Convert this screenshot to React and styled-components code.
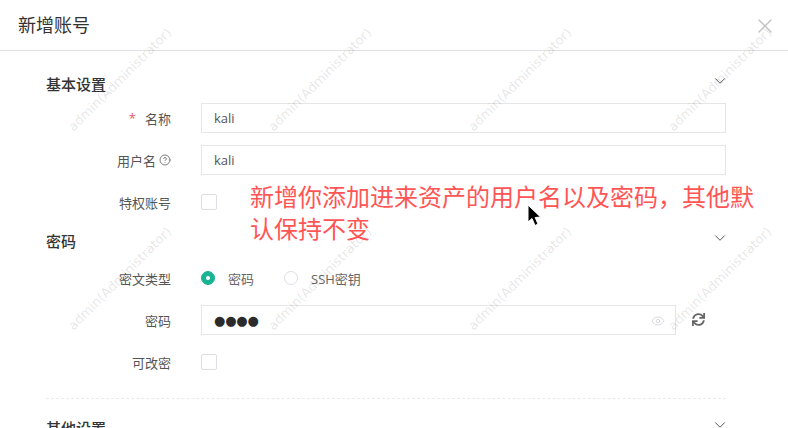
import styled, { createGlobalStyle } from "styled-components";
import { X, Eye, CircleHelp, ChevronDown } from "lucide-react";
import { FaSync } from "react-icons/fa";

const GlobalStyle = createGlobalStyle`
  html, body {
    margin: 0;
    padding: 0;
    background: #fff;
    font-family: "Open Sans", "Noto Sans CJK SC", sans-serif;
    color: #333;
  }
`;

function Section({ title, children, $gap, $top }) {
  return (
    <SectionBox $top={$top}>
      <SectionHead $gap={$gap}>
        <SectionTitle>{title}</SectionTitle>
        <Chevron>
          <ChevronDown size={18} strokeWidth={1.2} />
        </Chevron>
      </SectionHead>
      {children}
    </SectionBox>
  );
}

function Row({ label, required, help, children }) {
  return (
    <FormRow>
      <Label>
        {required && <Star>*</Star>}
        {label}
        {help && <CircleHelp size={12} strokeWidth={1.5} />}
      </Label>
      {children}
    </FormRow>
  );
}

export default function App() {
  const marks = Array.from({ length: 8 });
  return (
    <>
      <GlobalStyle />
      <Modal>
        <Header>
          <Title>新增账号</Title>
          <CloseButton>
            <X size={24} strokeWidth={1.5} />
          </CloseButton>
        </Header>
        <Body>
          <Section title="基本设置">
            <Row label="名称" required>
              <TextInput readOnly value="kali" />
            </Row>
            <Row label="用户名" help>
              <TextInput readOnly value="kali" />
            </Row>
            <Row label="特权账号">
              <Checkbox />
            </Row>
          </Section>
          <Section title="密码" $gap={3} $top={7}>
            <Row label="密文类型">
              <RadioGroup>
                <RadioItem>
                  <RadioDot $checked />
                  <RadioText>密码</RadioText>
                </RadioItem>
                <RadioItem>
                  <RadioDot />
                  <RadioText>SSH密钥</RadioText>
                </RadioItem>
              </RadioGroup>
            </Row>
            <Row label="密码">
              <PasswordWrap>
                <PasswordBox>
                  <Dots>●●●●</Dots>
                  <EyeIcon>
                    <Eye size={14} strokeWidth={1.2} />
                  </EyeIcon>
                </PasswordBox>
                <Refresh>
                  <FaSync size={13} />
                </Refresh>
              </PasswordWrap>
            </Row>
            <Row label="可改密">
              <Checkbox />
            </Row>
          </Section>
          <Divider />
          <Section title="其他设置" />
        </Body>
        <Watermarks>
          {marks.map((_, i) => (
            <Tile key={i}>
              <Mark>admin(Administrator)</Mark>
            </Tile>
          ))}
        </Watermarks>
        <Annotation>新增你添加进来资产的用户名以及密码，其他默认保持不变</Annotation>
        <Cursor width="16" height="24" viewBox="0 0 16 24">
          <path
            d="M1 1 L1 18 L5 14.5 L8 21.5 L11 20 L8.2 13.5 L13.5 13 Z"
            fill="#000"
            stroke="#fff"
            strokeWidth="1"
          />
        </Cursor>
      </Modal>
    </>
  );
}

const Modal = styled.div`
  position: relative;
  width: 788px;
  height: 428px;
  overflow: hidden;
  background: #fff;
`;

const Header = styled.div`
  height: 50px;
  box-sizing: content-box;
  display: flex;
  align-items: center;
  justify-content: space-between;
  padding: 0 11px 0 18px;
  border-bottom: 1px solid #e0e0e6;
`;

const Title = styled.div`
  font-size: 18px;
  color: #333;
  margin-top: -3px;
`;

const CloseButton = styled.div`
  display: flex;
  color: #c4c4c4;
  margin-top: 2px;
`;

const Body = styled.div`
  padding: 16px 62px 0 46px;
`;

const SectionBox = styled.div`
  margin-top: ${(p) => p.$top || 0}px;
`;

const SectionHead = styled.div`
  height: 36px;
  display: flex;
  align-items: center;
  justify-content: space-between;
  margin-bottom: ${(p) => p.$gap || 0}px;
`;

const SectionTitle = styled.div`
  font-size: 15px;
  font-weight: 500;
  color: #333;
  margin-top: -4px;
`;

const Chevron = styled.div`
  display: flex;
  color: #444;
  margin: -9px -3px 0 0;
`;

const FormRow = styled.div`
  display: grid;
  grid-template-columns: 125px 1fr;
  column-gap: 30px;
  align-items: center;
  height: 30px;
  margin-bottom: 12px;
  &:last-child {
    margin-bottom: 0;
  }
`;

const Label = styled.div`
  display: flex;
  align-items: center;
  justify-content: flex-end;
  gap: 3px;
  font-size: 13px;
  color: #555;
`;

const Star = styled.span`
  color: #ed5565;
  margin-right: 6px;
`;

const TextInput = styled.input`
  box-sizing: border-box;
  width: 100%;
  height: 30px;
  padding: 0 12px;
  border: 1px solid #e5e6e7;
  outline: none;
  background: transparent;
  font-family: "Open Sans", sans-serif;
  font-size: 13px;
  color: #555;
`;

const Checkbox = styled.span`
  box-sizing: border-box;
  display: block;
  width: 16px;
  height: 16px;
  border: 1px solid #dcdfe6;
  border-radius: 2px;
`;

const RadioGroup = styled.div`
  display: flex;
  gap: 30px;
`;

const RadioItem = styled.div`
  display: flex;
  align-items: center;
  gap: 13px;
`;

const RadioDot = styled.span`
  box-sizing: border-box;
  position: relative;
  width: 14px;
  height: 14px;
  border-radius: 50%;
  border: 1px solid ${(p) => (p.$checked ? "#1ab394" : "#dcdfe6")};
  background: ${(p) => (p.$checked ? "#1ab394" : "#fff")};
  &::after {
    content: "";
    display: ${(p) => (p.$checked ? "block" : "none")};
    position: absolute;
    left: 4px;
    top: 4px;
    width: 4px;
    height: 4px;
    border-radius: 50%;
    background: #fff;
  }
`;

const RadioText = styled.span`
  font-size: 13px;
  color: #666;
`;

const PasswordWrap = styled.div`
  display: flex;
  align-items: center;
`;

const PasswordBox = styled.div`
  box-sizing: border-box;
  width: 475px;
  height: 30px;
  padding: 0 10px 0 12px;
  display: flex;
  align-items: center;
  justify-content: space-between;
  border: 1px solid #e5e6e7;
`;

const Dots = styled.span`
  font-family: "DejaVu Sans", sans-serif;
  font-size: 13px;
  letter-spacing: -0.2px;
  color: #2b2b2b;
`;

const EyeIcon = styled.span`
  display: flex;
  color: #c8ccd4;
  margin-top: 2px;
`;

const Refresh = styled.span`
  display: flex;
  margin: -2px 0 0 16px;
  color: #666;
`;

const Divider = styled.div`
  border-top: 1px dashed #e7eaec;
  margin-top: 21px;
  margin-bottom: 12px;
`;

const Watermarks = styled.div`
  position: absolute;
  left: 20px;
  top: -20px;
  width: 800px;
  display: grid;
  grid-template-columns: repeat(4, 200px);
  grid-auto-rows: 199px;
  pointer-events: none;
`;

const Tile = styled.div`
  display: flex;
  align-items: center;
  justify-content: center;
`;

const Mark = styled.span`
  transform: rotate(-45deg);
  white-space: nowrap;
  font-family: "DejaVu Sans", sans-serif;
  font-size: 13px;
  color: rgba(0, 0, 0, 0.11);
`;

const Annotation = styled.div`
  position: absolute;
  left: 250px;
  top: 180px;
  width: 510px;
  font-family: "Noto Sans CJK SC", sans-serif;
  font-size: 24px;
  font-weight: 400;
  line-height: 32px;
  color: #ff5555;
`;

const Cursor = styled.svg`
  position: absolute;
  left: 527px;
  top: 204px;
`;
